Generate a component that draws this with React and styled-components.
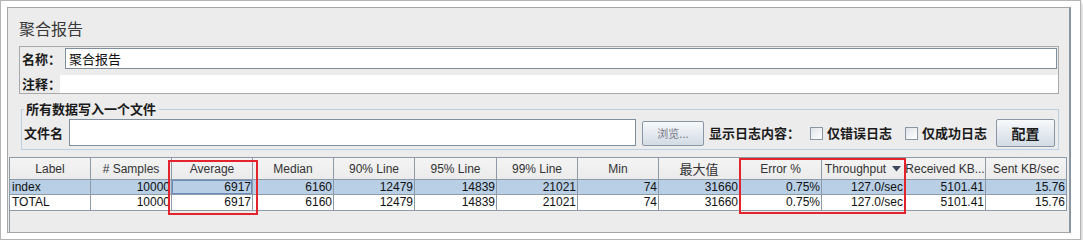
import React from "react";
import styled, { createGlobalStyle } from "styled-components";

const GlobalStyle = createGlobalStyle`
  html, body {
    margin: 0;
    padding: 0;
    background: #ffffff;
  }
  * {
    box-sizing: border-box;
  }
`;

const cjk = `"Noto Sans CJK SC", "Liberation Sans", sans-serif`;
const latin = `"Liberation Sans", Arial, sans-serif`;
const grid = "#8d9aa7";

const Frame = styled.div`
  width: 1081px;
  height: 240px;
  border: 1px solid #b4b4b4;
  padding: 6px;
  background: #ffffff;
  box-shadow: 2px 3px 4px rgba(0, 0, 0, 0.18);
`;

const Panel = styled.div`
  width: 1064px;
  height: 226px;
  display: flex;
  flex-direction: column;
  background: #ececec;
  border-top: 1px solid #a6a6a6;
  border-left: 1px solid #a6a6a6;
  border-bottom: 1px solid #a6a6a6;
  border-right: 2px solid #8995a1;
`;

const Title = styled.div`
  height: 38px;
  padding: 9px 0 0 11px;
  font-family: ${cjk};
  font-size: 16px;
  line-height: 22px;
  color: #383838;
`;

const NameBox = styled.div`
  height: 48px;
  margin: 0 10px 0 11px;
  border: 1px solid #a9a9a9;
  display: flex;
  flex-direction: column;
`;

const FieldRow = styled.div`
  display: flex;
  align-items: center;
  height: ${(p) => p.$h}px;
  margin-top: ${(p) => p.$top}px;
  margin-right: ${(p) => p.$right || 0}px;
`;

const Label = styled.span`
  flex: none;
  width: ${(p) => (p.$w ? `${p.$w}px` : "auto")};
  padding-left: ${(p) => p.$pl || 0}px;
  margin-right: ${(p) => p.$mr || 0}px;
  font-family: ${cjk};
  font-size: 13px;
  font-weight: 700;
  line-height: 16px;
  color: #1a1a1a;
  white-space: nowrap;
`;

const TextInput = styled.div`
  flex: 1;
  height: 100%;
  display: flex;
  align-items: center;
  padding-left: 3px;
  background: #ffffff;
  border: ${(p) => (p.$plain ? "none" : "1px solid #7f8e9d")};
  font-family: ${cjk};
  font-size: 13px;
  color: #111;
`;

const Group = styled.fieldset`
  margin: 7px 10px 0 13px;
  padding: 2px 3px 2px 2px;
  border: 1px solid #b9cfe4;
  min-width: 0;
`;

const Legend = styled.legend`
  padding: 0 3px 0 2px;
  font-family: ${cjk};
  font-size: 13px;
  font-weight: 700;
  line-height: 16px;
  color: #1a1a1a;
`;

const FileRow = styled.div`
  display: flex;
  align-items: center;
  height: 28px;
`;

const FileInput = styled.div`
  flex: 1;
  height: 27px;
  align-self: flex-start;
  background: #ffffff;
  border: 1px solid #7f8e9d;
`;

const Button = styled.button`
  flex: none;
  width: ${(p) => p.$w}px;
  height: ${(p) => p.$h}px;
  margin: 0 ${(p) => p.$mr || 0}px 0 ${(p) => p.$ml || 0}px;
  padding: 0;
  border: 1px solid #8896a5;
  border-radius: 2px;
  background: linear-gradient(#f7f9fb, #e6ebf1 45%, #d3dbe4);
  font-family: ${cjk};
  font-size: ${(p) => (p.$small ? 11 : 14)}px;
  font-weight: ${(p) => (p.$small ? 400 : 700)};
  color: ${(p) => (p.$small ? "#7b7b8a" : "#1a1a1a")};
`;

const Check = styled.span`
  flex: none;
  width: 13px;
  height: 13px;
  margin: 0 4px 0 ${(p) => p.$ml}px;
  border: 1px solid #8a98a6;
  background: linear-gradient(135deg, #dfe4ea, #ffffff);
`;

const Pane = styled.div`
  position: relative;
  flex: 1;
  margin: 7px 0 0 1px;
  border-left: 1px solid ${grid};
`;

const Table = styled.div`
  display: grid;
  grid-template-columns: ${(p) => p.$cols};
  font-family: ${latin};
  font-size: 12px;
`;

const HeadCell = styled.div`
  height: 22px;
  display: flex;
  align-items: center;
  justify-content: center;
  gap: 6px;
  padding: 0 2px;
  border-top: 1px solid ${grid};
  border-right: 1px solid ${grid};
  background: linear-gradient(#f4f4f4, #ebebeb);
  color: #333;
  font-family: ${cjk};
  font-size: 12px;
  white-space: nowrap;
  overflow: hidden;
`;

const HeadText = styled.span`
  font-family: ${(p) => (p.$cjk ? cjk : latin)};
  font-size: ${(p) => (p.$cjk ? 13 : 12)}px;
`;

const Cell = styled.div`
  height: 16px;
  line-height: 15px;
  padding: 0 1px 0 2px;
  text-align: ${(p) => (p.$left ? "left" : "right")};
  border-bottom: 1px solid ${grid};
  border-right: 1px solid ${grid};
  border-top: ${(p) => (p.$first ? `1px solid ${grid}` : "none")};
  background: ${(p) => (p.$selected ? "#b8cfe5" : "#ffffff")};
  box-shadow: ${(p) => (p.$focus ? "inset 0 0 0 1px #6c8bbd" : "none")};
  color: #111;
  white-space: nowrap;
  overflow: visible;
`;

const Highlight = styled.div`
  position: absolute;
  left: ${(p) => p.$x}px;
  top: ${(p) => p.$y}px;
  width: ${(p) => p.$w}px;
  height: ${(p) => p.$h}px;
  border: 2px solid #e5232c;
  pointer-events: none;
`;

const SortArrow = () => (
  <svg width="9" height="6" viewBox="0 0 9 6">
    <path d="M0 0 H9 L4.5 5.5 Z" fill="#3b4a5c" />
  </svg>
);

const widths = [81, 81, 81, 81, 81, 82, 81, 81, 81, 82, 83, 81, 81];

const headers = [
  "Label",
  "# Samples",
  "Average",
  "Median",
  "90% Line",
  "95% Line",
  "99% Line",
  "Min",
  "最大值",
  "Error %",
  "Throughput",
  "Received KB...",
  "Sent KB/sec",
];

const rows = [
  ["index", "10000", "6917", "6160", "12479", "14839", "21021", "74", "31660", "0.75%", "127.0/sec", "5101.41", "15.76"],
  ["TOTAL", "10000", "6917", "6160", "12479", "14839", "21021", "74", "31660", "0.75%", "127.0/sec", "5101.41", "15.76"],
];

export default function App() {
  return (
    <>
      <GlobalStyle />
      <Frame>
        <Panel>
          <Title>聚合报告</Title>

          <NameBox>
            <FieldRow $h={21} $top={1} $right={1}>
              <Label $w={45} $pl={2}>名称：</Label>
              <TextInput>聚合报告</TextInput>
            </FieldRow>
            <FieldRow $h={18} $top={6}>
              <Label $w={40} $pl={2}>注释：</Label>
              <TextInput $plain />
            </FieldRow>
          </NameBox>

          <Group>
            <Legend>所有数据写入一个文件</Legend>
            <FileRow>
              <Label $mr={6}>文件名</Label>
              <FileInput />
              <Button $w={62} $h={25} $ml={6} $mr={5} $small>
                浏览...
              </Button>
              <Label>显示日志内容：</Label>
              <Check $ml={10} />
              <Label>仅错误日志</Label>
              <Check $ml={13} />
              <Label>仅成功日志</Label>
              <Button $w={59} $h={28} $ml={9}>
                配置
              </Button>
            </FileRow>
          </Group>

          <Pane>
            <Table $cols={widths.map((w) => `${w}px`).join(" ")}>
              {headers.map((h) => (
                <HeadCell key={h}>
                  <HeadText $cjk={h === "最大值"}>{h}</HeadText>
                  {h === "Throughput" && <SortArrow />}
                </HeadCell>
              ))}
              {rows.map((row, ri) =>
                row.map((v, ci) => (
                  <Cell
                    key={`${ri}-${ci}`}
                    $first={ri === 0}
                    $left={ci === 0}
                    $selected={ri === 0}
                    $focus={ri === 0 && ci === 2}
                  >
                    {v}
                  </Cell>
                ))
              )}
            </Table>
            <Highlight $x={158} $y={3} $w={90} $h={55} />
            <Highlight $x={729} $y={1} $w={167} $h={56} />
          </Pane>
        </Panel>
      </Frame>
    </>
  );
}
